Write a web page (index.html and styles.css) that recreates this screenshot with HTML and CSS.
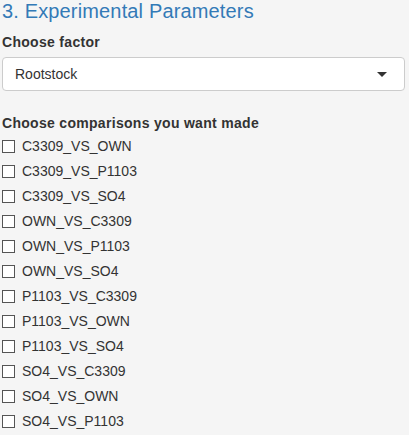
FILE: index.html
```html
<!DOCTYPE html>
<html>
<head>
<meta charset="utf-8">
<link rel="stylesheet" href="styles.css">
</head>
<body>
<div class="panel">
  <h4 class="title">3. Experimental Parameters</h4>
  <div class="form-group">
    <label class="control-label">Choose factor</label>
    <div class="select">
      <span class="select-value">Rootstock</span>
      <span class="caret"></span>
    </div>
  </div>
  <div class="form-group">
    <label class="control-label">Choose comparisons you want made</label>
    <div class="options">
      <label class="checkbox"><input type="checkbox"><span>C3309_VS_OWN</span></label>
      <label class="checkbox"><input type="checkbox"><span>C3309_VS_P1103</span></label>
      <label class="checkbox"><input type="checkbox"><span>C3309_VS_SO4</span></label>
      <label class="checkbox"><input type="checkbox"><span>OWN_VS_C3309</span></label>
      <label class="checkbox"><input type="checkbox"><span>OWN_VS_P1103</span></label>
      <label class="checkbox"><input type="checkbox"><span>OWN_VS_SO4</span></label>
      <label class="checkbox"><input type="checkbox"><span>P1103_VS_C3309</span></label>
      <label class="checkbox"><input type="checkbox"><span>P1103_VS_OWN</span></label>
      <label class="checkbox"><input type="checkbox"><span>P1103_VS_SO4</span></label>
      <label class="checkbox"><input type="checkbox"><span>SO4_VS_C3309</span></label>
      <label class="checkbox"><input type="checkbox"><span>SO4_VS_OWN</span></label>
      <label class="checkbox"><input type="checkbox"><span>SO4_VS_P1103</span></label>
    </div>
  </div>
</div>
</body>
</html>
```

FILE: styles.css
```css
html, body {
  margin: 0;
  padding: 0;
  background: #f5f5f5;
}
body {
  font-family: "Liberation Sans", Arial, sans-serif;
  font-size: 14px;
  line-height: 20px;
  color: #333;
}
.panel {
  padding: 0 4px 0 2px;
}
.title {
  margin: 0;
  font-size: 20px;
  line-height: 22px;
  font-weight: normal;
  letter-spacing: 0.15px;
  color: #337ab7;
}
.form-group {
  margin-top: 10px;
}
.form-group + .form-group {
  margin-top: 22px;
}
.control-label {
  display: block;
  font-weight: bold;
  letter-spacing: 0.3px;
  margin-bottom: 5px;
}
.select {
  box-sizing: border-box;
  height: 34px;
  background: #fff;
  border: 1px solid #ccc;
  border-radius: 4px;
  padding: 0 12px;
  display: flex;
  align-items: center;
  justify-content: space-between;
}
.select-value {
  color: #333;
}
.caret {
  width: 0;
  height: 0;
  border-left: 5px solid transparent;
  border-right: 5px solid transparent;
  border-top: 5px solid #333;
  margin-right: 5px;
}
.options {
  display: flex;
  flex-direction: column;
  gap: 5px;
  margin-top: -2px;
}
.checkbox {
  display: flex;
  align-items: center;
  height: 20px;
  font-weight: normal;
}
.checkbox input {
  appearance: none;
  -webkit-appearance: none;
  box-sizing: border-box;
  margin: 0 7px 0 0;
  width: 13px;
  height: 13px;
  border: 1px solid #555;
  border-radius: 0;
  background: #fff;
}
```
